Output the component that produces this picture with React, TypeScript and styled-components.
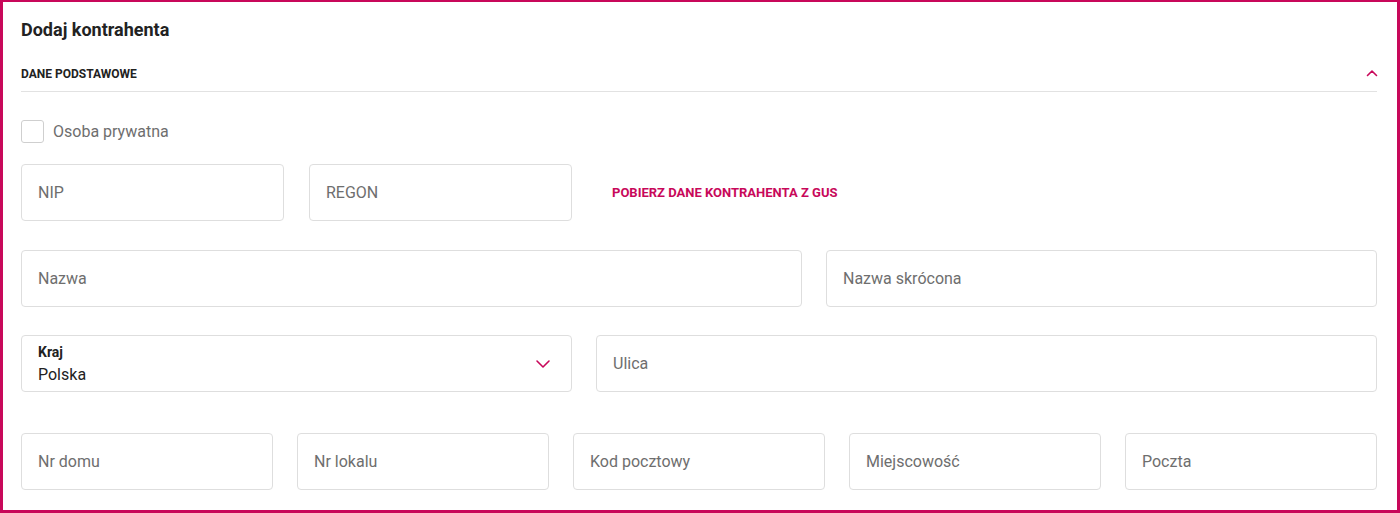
import React from "react"
import styled, { createGlobalStyle } from "styled-components"

const pink = "#c8085a"

const GlobalStyle = createGlobalStyle`
  html, body {
    margin: 0;
    padding: 0;
    background: #fff;
  }
  * {
    box-sizing: border-box;
  }
  body {
    font-family: Roboto, "Liberation Sans", sans-serif;
    color: #222;
  }
`

const Frame = styled.div`
  height: 513px;
  border: 3px solid ${pink};
  border-top-width: 2px;
  padding: 0 20px 0 18px;
  overflow: hidden;
  background: #fff;
`

const Title = styled.h1`
  margin: 0;
  padding-top: 18px;
  font-size: 18px;
  line-height: 20px;
  font-weight: 700;
  color: #222;
`

const SectionHeader = styled.div`
  display: flex;
  align-items: center;
  justify-content: space-between;
  height: 52px;
  padding-top: 17px;
  border-bottom: 1px solid #e2e2e2;
`

const SectionTitle = styled.span`
  font-size: 12px;
  font-weight: 700;
  color: #222;
`

const Toggle = styled.button`
  border: 0;
  background: none;
  padding: 0;
  margin-right: -2px;
  margin-top: -2px;
  display: flex;
  cursor: pointer;
`

const CheckRow = styled.label`
  display: flex;
  align-items: center;
  gap: 9px;
  margin-top: 28px;
  font-size: 16px;
  color: #6e6e6e;
  cursor: pointer;
`

const CheckBox = styled.span`
  width: 23px;
  height: 23px;
  border: 1px solid #cfcfcf;
  border-radius: 3px;
  background: #fff;
`

const Row = styled.div<{ $top: number }>`
  display: grid;
  grid-template-columns: repeat(12, 1fr);
  column-gap: 24px;
  margin-top: ${({ $top }) => $top}px;
`

const FiveRow = styled.div<{ $top: number }>`
  display: grid;
  grid-template-columns: repeat(5, 1fr);
  column-gap: 24px;
  margin-top: ${({ $top }) => $top}px;
`

const Cell = styled.div<{ $span: number }>`
  grid-column: span ${({ $span }) => $span};
  min-width: 0;
`

const Pair = styled.div`
  display: grid;
  grid-template-columns: 1fr 1fr;
  column-gap: 25px;
`

const Input = styled.input`
  display: block;
  width: 100%;
  height: 57px;
  padding: 0 16px;
  border: 1px solid #dedede;
  border-radius: 4px;
  background: #fff;
  font-family: inherit;
  font-size: 16px;
  color: #222;
  outline: none;
  &::placeholder {
    color: #6e6e6e;
  }
`

const LinkCell = styled.div`
  grid-column: span 7;
  display: flex;
  align-items: center;
  padding-left: 16px;
`

const GusLink = styled.a`
  font-size: 13px;
  font-weight: 700;
  color: ${pink};
  text-decoration: none;
  cursor: pointer;
`

const Select = styled.div`
  display: flex;
  align-items: center;
  justify-content: space-between;
  height: 57px;
  padding: 0 20px 0 16px;
  border: 1px solid #dedede;
  border-radius: 4px;
  cursor: pointer;
`

const SelectText = styled.div`
  display: flex;
  flex-direction: column;
  gap: 4px;
`

const SelectLabel = styled.span`
  font-size: 14px;
  line-height: 18px;
  font-weight: 700;
  color: #222;
`

const SelectValue = styled.span`
  font-size: 16px;
  line-height: 20px;
  color: #222;
`

const ChevronUp = () => (
  <svg width="14" height="14" viewBox="0 0 14 14" fill="none">
    <path d="M2.5 9.5 L7 5 L11.5 9.5" stroke={pink} strokeWidth="1.6" strokeLinecap="round" strokeLinejoin="round" />
  </svg>
)

const ChevronDown = () => (
  <svg width="16" height="16" viewBox="0 0 16 16" fill="none">
    <path d="M2 5 L8 11 L14 5" stroke={pink} strokeWidth="1.6" strokeLinecap="round" strokeLinejoin="round" />
  </svg>
)

const App = () => {
  return (
    <>
      <GlobalStyle />
      <Frame>
        <Title>Dodaj kontrahenta</Title>
        <SectionHeader>
          <SectionTitle>DANE PODSTAWOWE</SectionTitle>
          <Toggle aria-label="Zwiń">
            <ChevronUp />
          </Toggle>
        </SectionHeader>

        <CheckRow>
          <CheckBox />
          Osoba prywatna
        </CheckRow>

        <Row $top={21}>
          <Cell $span={5}>
            <Pair>
              <Input placeholder="NIP" />
              <Input placeholder="REGON" />
            </Pair>
          </Cell>
          <LinkCell>
            <GusLink>POBIERZ DANE KONTRAHENTA Z GUS</GusLink>
          </LinkCell>
        </Row>

        <Row $top={29}>
          <Cell $span={7}>
            <Input placeholder="Nazwa" />
          </Cell>
          <Cell $span={5}>
            <Input placeholder="Nazwa skrócona" />
          </Cell>
        </Row>

        <Row $top={28}>
          <Cell $span={5}>
            <Select>
              <SelectText>
                <SelectLabel>Kraj</SelectLabel>
                <SelectValue>Polska</SelectValue>
              </SelectText>
              <ChevronDown />
            </Select>
          </Cell>
          <Cell $span={7}>
            <Input placeholder="Ulica" />
          </Cell>
        </Row>

        <FiveRow $top={41}>
          <Input placeholder="Nr domu" />
          <Input placeholder="Nr lokalu" />
          <Input placeholder="Kod pocztowy" />
          <Input placeholder="Miejscowość" />
          <Input placeholder="Poczta" />
        </FiveRow>
      </Frame>
    </>
  )
}

export default App
